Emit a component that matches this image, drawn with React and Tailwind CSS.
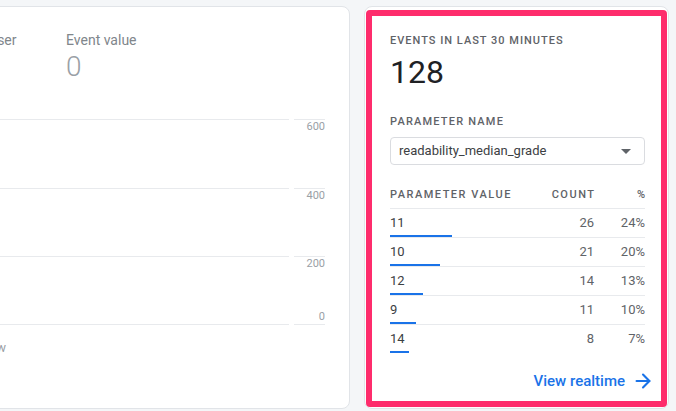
import { ArrowRight } from 'lucide-react';

const rows = [
  { value: '11', count: 26, pct: '24%', bar: 62 },
  { value: '10', count: 21, pct: '20%', bar: 50 },
  { value: '12', count: 14, pct: '13%', bar: 33 },
  { value: '9', count: 11, pct: '10%', bar: 26 },
  { value: '14', count: 8, pct: '7%', bar: 19 },
];

const ChartCard = () => (
  <div className="-ml-[110px] w-[460px] h-[403px] shrink-0 bg-white border border-[#e1e4e8] rounded-lg pl-[26px] pr-[24px] pt-[23px]">
    <div className="flex">
      <div className="w-[145px] ml-[4px]">
        <div className="text-[14px] leading-[20px] text-[#80868b]">Events per user</div>
        <div className="text-[28px] leading-[36px] font-light text-[#9aa0a6] -mt-px">4</div>
      </div>
      <div>
        <div className="text-[14px] leading-[20px] text-[#80868b]">Event value</div>
        <div className="text-[28px] leading-[36px] font-light text-[#9aa0a6] -mt-px">0</div>
      </div>
    </div>

    <div className="mt-[34px] text-[11px] leading-[14px] text-[#9aa0a6]">
      <div className="flex h-[69px]">
        <div className="flex-1 border-t border-[#e8eaed]" />
        <div className="w-[31px] ml-[5px] border-t border-[#e8eaed] text-right">600</div>
      </div>
      <div className="flex h-[68px]">
        <div className="flex-1 border-t border-[#e8eaed]" />
        <div className="w-[31px] ml-[5px] border-t border-[#e8eaed] text-right">400</div>
      </div>
      <div className="flex h-[68px]">
        <div className="flex-1 border-t border-[#e8eaed]" />
        <div className="w-[31px] ml-[5px] border-t border-[#e8eaed] text-right flex flex-col justify-between">
          <span>200</span>
          <span>0</span>
        </div>
      </div>
      <div className="flex">
        <div className="flex-1 border-t border-[#e8eaed]" />
        <div className="w-[31px] ml-[5px] border-t border-[#e8eaed]" />
      </div>
    </div>

    <div className="mt-[15px] w-[89px] text-right text-[13px] leading-[16px] text-[#9aa0a6]">Preview</div>
  </div>
);

const RealtimeCard = () => (
  <div className="ml-[14px] w-[305px] h-[403px] shrink-0 bg-white border border-[#e1e4e8] rounded-lg p-px pt-[3px]">
    <div className="h-full border-[6px] border-[#fe2c6c] rounded-[4px] pl-[18px] pr-[16px] pt-[17px] flex flex-col">
      <div className="text-[11px] leading-[16px] font-medium tracking-[1px] text-[#5f6368]">EVENTS IN LAST 30 MINUTES</div>
      <div className="mt-[3px] text-[32px] leading-[40px] text-[#202124]">128</div>

      <div className="mt-[22px] text-[11px] leading-[16px] font-medium tracking-[1.2px] text-[#5f6368]">PARAMETER NAME</div>
      <div className="mt-[7px] h-[28px] border border-[#dadce0] rounded-[4px] flex items-center justify-between pl-[8px] pr-[6px]">
        <span className="text-[13px] text-[#3c4043]">readability_median_grade</span>
        <svg width="24" height="24" viewBox="0 0 24 24" fill="#5f6368">
          <path d="M7 10l5 5 5-5z" />
        </svg>
      </div>

      <div className="mt-[22px] grid grid-cols-[1fr_auto_51px] pb-[5px] border-b border-[#e8eaed] text-[11px] leading-[16px] font-medium tracking-[1.5px] text-[#5f6368]">
        <span>PARAMETER VALUE</span>
        <span className="text-right -mr-[1.5px]">COUNT</span>
        <span className="text-right -mr-[1.5px]">%</span>
      </div>

      {rows.map((r, i) => (
        <div
          key={r.value}
          className={`pt-[6px] ${i < rows.length - 1 ? 'border-b border-[#e8eaed]' : 'pb-px'}`}
        >
          <div className="grid grid-cols-[1fr_auto_51px] text-[13px] leading-[16px]">
            <span className="text-[#3c4043]">{r.value}</span>
            <span className="text-right text-[#5f6368]">{r.count}</span>
            <span className="text-right text-[#5f6368]">{r.pct}</span>
          </div>
          <div className="mt-[4px] h-[2px] bg-[#1a73e8]" style={{ width: r.bar }} />
        </div>
      ))}

      <div className="mt-[16px] flex justify-end -mr-[9px]">
        <a href="#" className="flex items-center gap-[7px] text-[15px] leading-[20px] font-medium text-[#1a73e8]">
          View realtime
          <ArrowRight size={22} strokeWidth={2.3} />
        </a>
      </div>
    </div>
  </div>
);

export default function App() {
  return (
    <div className="w-[676px] h-[411px] overflow-hidden bg-[#f4f6f8] pt-[6px] flex font-['Roboto',sans-serif]">
      <ChartCard />
      <RealtimeCard />
    </div>
  );
}
